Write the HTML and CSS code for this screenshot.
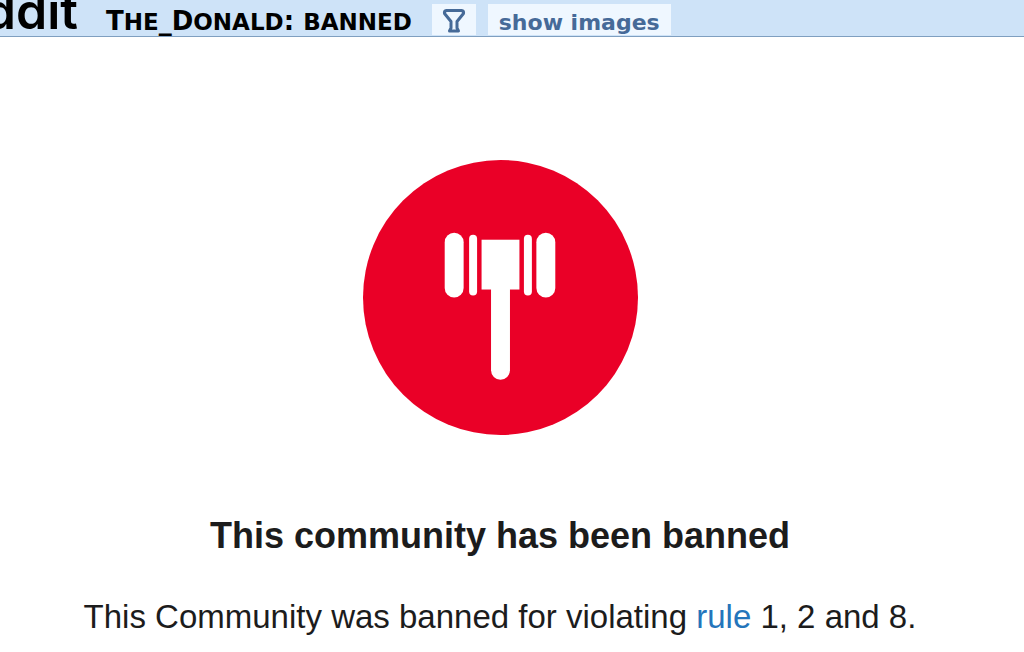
FILE: index.html
```html
<!DOCTYPE html>
<html lang="en">
<head>
    <meta charset="UTF-8">
    <meta name="viewport" content="width=device-width, initial-scale=1.0">
    <title>The_Donald: banned</title>
    <link rel="stylesheet" href="styles.css">
</head>
<body>

<header class="header">
    <div class="logo"><span>ddit</span></div>
    <div class="pagename">T<span class="small">he</span>_D<span class="small">onald</span>: <span class="small">banned</span></div>
    <button class="tab tab-filter" type="button" aria-label="filter">
        <svg width="24" height="26" viewBox="0 0 24 26" fill="none" stroke="#466a98" stroke-width="3" stroke-linejoin="round">
            <path d="M4.500 2.500H19.500Q22 3 21.500 5.500L15 13.500V20L16.500 23H7.500L9 20V13.500L2.500 5.500Q2 3 4.500 2.500Z"/>
        </svg>
    </button>
    <button class="tab tab-images" type="button">show images</button>
</header>

<main class="content">
    <svg class="gavel" viewBox="0 0 276 276" aria-hidden="true">
        <circle cx="138" cy="138" r="138" fill="#ea0027"/>
        <g fill="#fff">
            <rect x="82" y="73" width="19" height="65" rx="9.500"/>
            <rect x="106.500" y="75" width="8" height="61" rx="4"/>
            <rect x="119" y="80" width="38" height="50"/>
            <rect x="161.500" y="75" width="8" height="61" rx="4"/>
            <rect x="174" y="73" width="19" height="65" rx="9.500"/>
            <path d="M128.500 129h19v82a9.500 9.500 0 0 1-19 0z"/>
        </g>
    </svg>
    <h1>This community has been banned</h1>
    <p>This Community was banned for violating <a href="#">rule</a> 1, 2 and 8.</p>
</main>

</body>
</html>
```

FILE: styles.css
```css
body {
    margin: 0;
    background-color: #fff;
    font-family: "Liberation Sans", Arial, sans-serif;
    color: #1c1c1c;
}

.header {
    display: flex;
    align-items: flex-end;
    height: 36px;
    border-bottom: 1px solid #7f9fc0;
    background-color: #cee3f8;
    font-family: "DejaVu Sans", Verdana, sans-serif;
    font-weight: bold;
}

/* the logo runs off the left and top edges */
.logo {
    display: flex;
    justify-content: flex-end;
    align-items: flex-end;
    width: 78px;
    height: 36px;
    margin-right: 28px;
    overflow: hidden;
    font-family: Inter, sans-serif;
    font-size: 50px;
    font-weight: 600;
    line-height: 50px;
    color: #000;
}

.pagename {
    margin-right: 20px;
    font-size: 26px;
    line-height: 28px;
    white-space: nowrap;
    color: #000;
}

.pagename .small {
    font-size: 23px;
    text-transform: uppercase;
}

.tab {
    display: flex;
    justify-content: center;
    align-items: center;
    box-sizing: border-box;
    height: 31px;
    margin: 0 12px 1px 0;
    padding: 6px 11px 0;
    border: none;
    background-color: #eff7ff;
    color: #466a98;
    font-family: inherit;
    font-size: 22px;
    font-weight: bold;
    line-height: 31px;
    white-space: nowrap;
    cursor: pointer;
}

.tab-filter {
    padding: 2px 10px 0;
}

.content {
    display: flex;
    flex-direction: column;
    align-items: center;
    padding: 123px 24px 16px 0;
    text-align: center;
}

.gavel {
    width: 275px;
    height: 275px;
}

h1 {
    margin: 79px 0 0;
    font-size: 36px;
    line-height: 44px;
}

p {
    margin: 39px 0 0;
    font-size: 33px;
    line-height: 40px;
}

p a {
    color: #2475bb;
    text-decoration: none;
}
```
